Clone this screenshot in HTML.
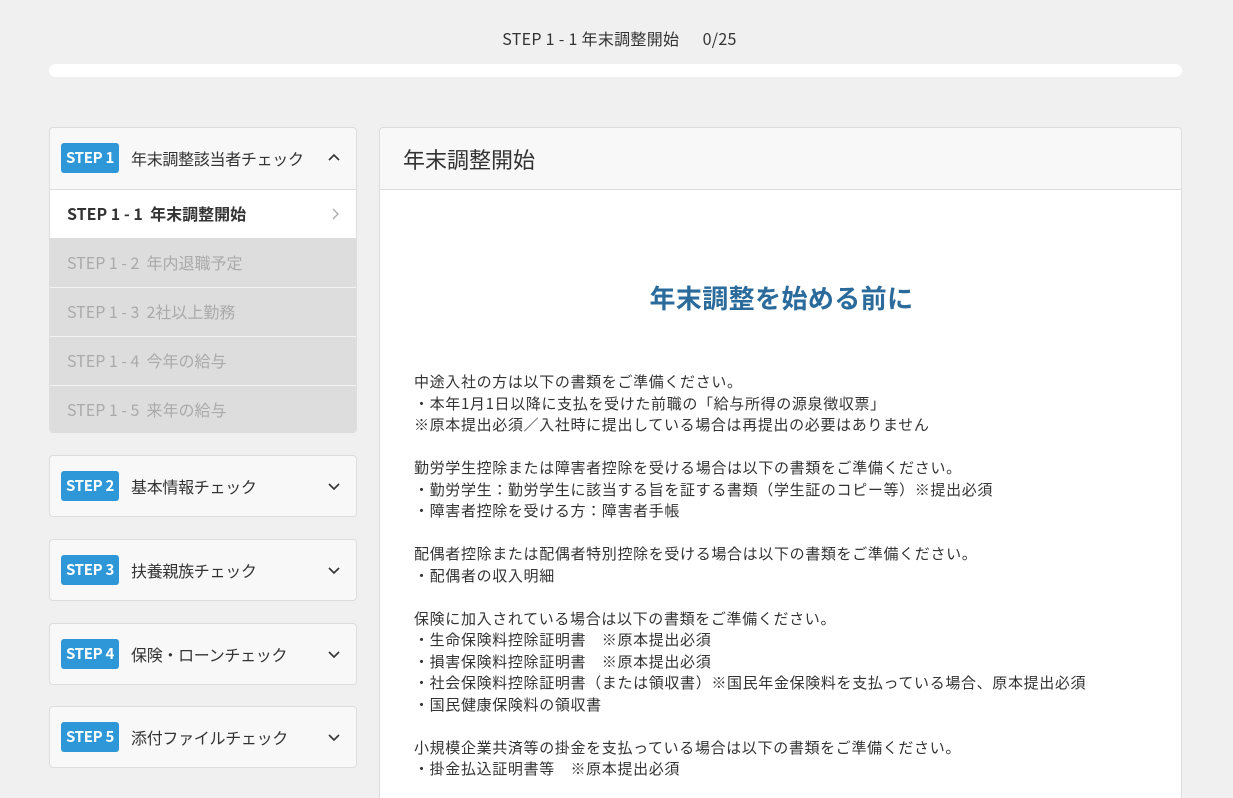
<!DOCTYPE html>
<html><head><meta charset="utf-8"><style>
*{box-sizing:border-box;margin:0;padding:0}
html{overflow:hidden;height:798px}
body{width:1233px;height:798px;overflow:hidden;background:#f0f0f0;font-family:"Liberation Sans","Noto Sans CJK JP",sans-serif;color:#333;position:relative}
.top{position:absolute;top:26px;left:3px;width:1233px;text-align:center;font-size:16px;color:#333;font-family:"Noto Sans CJK JP",sans-serif;letter-spacing:0.3px}
.bar{position:absolute;left:49px;top:64px;width:1133px;height:13px;background:#fff;border-radius:7px}
.card{position:absolute;left:49px;width:308px;background:#f8f8f8;border:1px solid #ddd;border-radius:4px;overflow:hidden;font-family:"Noto Sans CJK JP",sans-serif}
.hd{height:61px;position:relative}
.badge{position:absolute;left:11px;top:15px;width:58px;height:30px;background:#2e97d8;color:#fff;font-weight:bold;font-size:15px;line-height:30px;text-align:center;border-radius:3px;letter-spacing:-0.3px}
.ht{position:absolute;left:81px;top:0;line-height:61px;font-size:16px;color:#333;letter-spacing:-0.3px}
.chev{position:absolute;right:16px;top:24px;width:12px;height:12px}
.item{height:49px;border-top:1px solid #ddd;background:#ddd;color:#aaa;font-size:16px;line-height:47px;padding-left:17px;position:relative}
.item.g{border-top:1px solid #f4f4f4}
.item.act{background:#fff;color:#333;font-weight:bold}
.main{position:absolute;left:379px;top:127px;width:803px;height:690px;background:#fff;border:1px solid #ddd;border-radius:4px;overflow:hidden;font-family:"Noto Sans CJK JP",sans-serif}
.mh{height:62px;background:#f8f8f8;border-bottom:1px solid #ddd;font-size:22px;line-height:62px;padding-left:23px;color:#333}
h2{position:absolute;top:151px;left:0;width:803px;text-align:center;font-size:26px;color:#2a6b9c;font-weight:bold;letter-spacing:0.4px}
.txt{position:absolute;left:34px;top:243px;font-size:15px;line-height:21.5px;color:#333;white-space:pre;letter-spacing:0.65px}
</style></head><body>
<div class="top">STEP 1 - 1 年末調整開始&nbsp;&nbsp;&nbsp;&nbsp;&nbsp;&nbsp;0/25</div>
<div class="bar"></div>

<div class="card" style="top:127px;height:306px">
 <div class="hd"><div class="badge">STEP 1</div><div class="ht">年末調整該当者チェック</div>
 <svg class="chev" viewBox="0 0 12 12"><path d="M1 8L6 3L11 8" fill="none" stroke="#333" stroke-width="1.6"/></svg></div>
 <div class="item act">STEP 1 - 1&nbsp; 年末調整開始<svg style="position:absolute;right:16px;top:18px" width="8" height="12" viewBox="0 0 8 12"><path d="M1 1L6 6L1 11" fill="none" stroke="#aaa" stroke-width="1.3"/></svg></div>
 <div class="item">STEP 1 - 2&nbsp; 年内退職予定</div>
 <div class="item g">STEP 1 - 3&nbsp; 2社以上勤務</div>
 <div class="item g">STEP 1 - 4&nbsp; 今年の給与</div>
 <div class="item g">STEP 1 - 5&nbsp; 来年の給与</div>
</div>
<div class="card" style="top:455px;height:62px"><div class="hd"><div class="badge">STEP 2</div><div class="ht">基本情報チェック</div><svg class="chev" viewBox="0 0 12 12"><path d="M1 4L6 9L11 4" fill="none" stroke="#333" stroke-width="1.6"/></svg></div></div>
<div class="card" style="top:539px;height:62px"><div class="hd"><div class="badge">STEP 3</div><div class="ht">扶養親族チェック</div><svg class="chev" viewBox="0 0 12 12"><path d="M1 4L6 9L11 4" fill="none" stroke="#333" stroke-width="1.6"/></svg></div></div>
<div class="card" style="top:623px;height:62px"><div class="hd"><div class="badge">STEP 4</div><div class="ht">保険・ローンチェック</div><svg class="chev" viewBox="0 0 12 12"><path d="M1 4L6 9L11 4" fill="none" stroke="#333" stroke-width="1.6"/></svg></div></div>
<div class="card" style="top:706px;height:62px"><div class="hd"><div class="badge">STEP 5</div><div class="ht">添付ファイルチェック</div><svg class="chev" viewBox="0 0 12 12"><path d="M1 4L6 9L11 4" fill="none" stroke="#333" stroke-width="1.6"/></svg></div></div>

<div class="main">
 <div class="mh">年末調整開始</div>
 <h2>年末調整を始める前に</h2>
 <div class="txt">中途入社の方は以下の書類をご準備ください。
・本年1月1日以降に支払を受けた前職の「給与所得の源泉徴収票」
※原本提出必須／入社時に提出している場合は再提出の必要はありません

勤労学生控除または障害者控除を受ける場合は以下の書類をご準備ください。
・勤労学生：勤労学生に該当する旨を証する書類（学生証のコピー等）※提出必須
・障害者控除を受ける方：障害者手帳

配偶者控除または配偶者特別控除を受ける場合は以下の書類をご準備ください。
・配偶者の収入明細

保険に加入されている場合は以下の書類をご準備ください。
・生命保険料控除証明書　※原本提出必須
・損害保険料控除証明書　※原本提出必須
・社会保険料控除証明書（または領収書）※国民年金保険料を支払っている場合、原本提出必須
・国民健康保険料の領収書

小規模企業共済等の掛金を支払っている場合は以下の書類をご準備ください。
・掛金払込証明書等　※原本提出必須</div>
</div>
</body></html>
